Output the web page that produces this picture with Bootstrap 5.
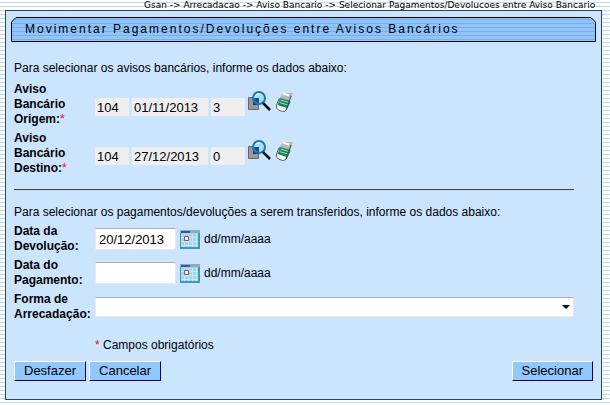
<!DOCTYPE html>
<html lang="pt-BR">
<head>
<meta charset="utf-8">
<meta name="viewport" content="width=device-width, initial-scale=1">
<title>Movimentar Pagamentos/Devoluções entre Avisos Bancários</title>
<link href="https://cdn.jsdelivr.net/npm/bootstrap@5.3.0/dist/css/bootstrap.min.css" rel="stylesheet">
<style>
body{font-family:"Liberation Sans",Arial,sans-serif;font-size:12px;line-height:15px;color:#000;overflow-x:hidden;
 background:repeating-linear-gradient(#fff 0 2px,#b9dcf3 2px 3px,#fff 3px 4px)}
.trail{font:9px/10px "DejaVu Sans",Verdana,sans-serif;height:10px;margin-left:144px;white-space:nowrap}
.panel{margin:0 8px 0 5px;border:1px solid #2b4560;background:#cbe5ff;padding:6px 5px 18px}
.titlebar{display:grid;height:25px}
.titlebar>*{grid-area:1/1}
.tb-bg{display:grid;grid-template-columns:6px 1fr 6px;height:25px}
.tb-bg svg{display:block;width:100%;height:25px}
.titlebar h1{font-size:12px;line-height:25px;letter-spacing:2px;margin:0;padding-left:14px;white-space:nowrap}
.content{padding:19px 3px 0}
.frow{display:grid;grid-template-columns:79px 1fr;column-gap:2px}
.lbl{font-weight:bold;white-space:nowrap}
.req{color:#f00;font-weight:normal}
.fld{font-size:13px;border-radius:0;color:#000;min-width:0}
.ro{border:0;background:#efefef;height:18px;padding:0 2px}
.ro-sm{width:34px}.ro-md{width:76px}
.dt,.sel{border:1px solid #e3e9ef;border-top-color:#abadb3;background:#fff;padding:0 3px}
.dt{width:81px;height:22px}
.selwrap{display:grid}
.selwrap>*{grid-area:1/1}
.sel{width:100%;height:20px;appearance:none}
.selwrap svg{place-self:center end;margin-right:4px;pointer-events:none}
.inset-end{margin-right:19px}
.rule{height:2px;margin:0;border-top:1px solid #444;border-bottom:1px solid #d8d8d8;opacity:1}
.act{border:1px solid;border-color:#fff #00005c #00005c #fff;border-radius:0;background:#90c8ff;color:#000;font-size:13px;line-height:16px;padding:1px 9px;height:20px}
.icb{border:0;background:none;padding:0;line-height:0}
.gap3{gap:3px}
.intro{margin:0 0 6px}
.codes{padding-bottom:11px}
.icons{padding-bottom:3px;gap:3px}
.split{padding:13px 0 14px}
</style>
<script src="https://cdn.jsdelivr.net/npm/bootstrap@5.3.0/dist/js/bootstrap.bundle.min.js"></script>
</head>
<body>
<svg width="0" height="0" class="position-absolute" aria-hidden="true">
<defs><pattern id="st" width="4" height="4" patternUnits="userSpaceOnUse"><path d="M0 0h4v4H0z" fill="#90c4fc"/><path d="M0 2.500h4" stroke="#7aaee6"/></pattern></defs>
<symbol id="find" viewBox="0 0 24 22"><path d="M.5 6.500h10v12h-10z" fill="#999" stroke="#666"/><path d="M5 6h6v8H5z" fill="#123c5c"/><circle cx="11" cy="7" r="6" fill="#a9dcff" stroke="#1479b8" stroke-width="2"/><path d="M6 7h5v5A5 5 0 0 1 6 7z" fill="#14547f"/><path d="M7 5q2-3 5-2" stroke="#fff" fill="none"/><path d="M15 12l7 7" stroke="#111" stroke-width="2.500"/></symbol>
<symbol id="erase" viewBox="0 0 20 20"><path d="M8 1l10 0-3 9-11-3z" fill="#b4b8b8"/><path d="M8 1.500l6 2" stroke="#fff" stroke-width="2"/><path d="M4 7l11 3-3.500 7.500q-1 2-4 2l-4-1.500Q1 17 1.500 13z" fill="#fff" stroke="#333" stroke-width=".8"/><path d="M5 6l10.500 3-3.500 7-9.500-3z" fill="#12855a"/><path d="M5.500 8l8.500 2.500M4.500 10.500l8.500 2.500" stroke="#a9e0c6" fill="none"/><path d="M16 4l-5 14" stroke="#333" stroke-width=".8"/></symbol>
<symbol id="cal" viewBox="0 0 20 19"><path d="M0 0h20v19H0z" fill="#4795b5"/><path d="M1 3h17v14H1z" fill="#a0d8ea"/><path d="M0 0h20v3H0z" fill="#8eabc0"/><path d="M1 1h9v2H1z" fill="#3c4eb0"/><path d="M1 7.500h17M1 11.500h17M1 15.500h17M4.500 4v13M8.500 4v13M12.500 4v13M16.500 4v13" stroke="#c4eaf6"/><path d="M4.500 6.500h4v4h-4z" fill="#eee" stroke="#a04850"/></symbol>
</svg>
<nav class="trail" aria-label="Caminho">Gsan -&gt; Arrecadacao -&gt; Aviso Bancario -&gt; Selecionar Pagamentos/Devolucoes entre Aviso Bancario</nav>
<main class="panel">
<header class="titlebar">
<div class="tb-bg" aria-hidden="true">
<svg viewBox="0 0 6 25"><path d="M6 .5H5L.5 5v19.500H6" fill="url(#st)" stroke="#000"/></svg>
<svg><rect width="100%" height="25" fill="url(#st)"/><path d="M0 .5h2000M0 24.500h2000" stroke="#000"/></svg>
<svg viewBox="0 0 6 25"><path d="M0 .5h1L5.500 5v19.500H0" fill="url(#st)" stroke="#000"/></svg>
</div>
<h1>Movimentar Pagamentos/Devoluções entre Avisos Bancários</h1>
</header>
<form class="content">
<p class="intro">Para selecionar os avisos bancários, informe os dados abaixo:</p>
<div class="frow mb-1">
<label class="lbl" for="o1">Aviso<br>Bancário<br>Origem:<span class="req">*</span></label>
<div class="d-flex align-items-end gap3 codes">
<input id="o1" class="fld ro ro-sm" value="104" readonly><input class="fld ro ro-md" value="01/11/2013" aria-label="Data do aviso de origem" readonly><input class="fld ro ro-sm" value="3" aria-label="Sequencial do aviso de origem" readonly>
<div class="d-flex icons"><button type="button" class="icb" aria-label="Pesquisar aviso de origem"><svg width="24" height="22"><use href="#find"/></svg></button><button type="button" class="icb" aria-label="Limpar aviso de origem"><svg width="20" height="20"><use href="#erase"/></svg></button></div>
</div>
</div>
<div class="frow">
<label class="lbl" for="d1">Aviso<br>Bancário<br>Destino:<span class="req">*</span></label>
<div class="d-flex align-items-end gap3 codes">
<input id="d1" class="fld ro ro-sm" value="104" readonly><input class="fld ro ro-md" value="27/12/2013" aria-label="Data do aviso de destino" readonly><input class="fld ro ro-sm" value="0" aria-label="Sequencial do aviso de destino" readonly>
<div class="d-flex icons"><button type="button" class="icb" aria-label="Pesquisar aviso de destino"><svg width="24" height="22"><use href="#find"/></svg></button><button type="button" class="icb" aria-label="Limpar aviso de destino"><svg width="20" height="20"><use href="#erase"/></svg></button></div>
</div>
</div>
<div class="split inset-end"><hr class="rule"></div>
<p class="mb-1">Para selecionar os pagamentos/devoluções a serem transferidos, informe os dados abaixo:</p>
<div class="frow mb-1">
<label class="lbl" for="dd">Data da<br>Devolução:</label>
<div class="d-flex align-items-center gap-1"><input id="dd" class="fld dt" value="20/12/2013"><button type="button" class="icb" aria-label="Abrir calendário"><svg width="20" height="19"><use href="#cal"/></svg></button><span>dd/mm/aaaa</span></div>
</div>
<div class="frow mb-1">
<label class="lbl" for="dp">Data do<br>Pagamento:</label>
<div class="d-flex align-items-center gap-1"><input id="dp" class="fld dt"><button type="button" class="icb" aria-label="Abrir calendário"><svg width="20" height="19"><use href="#cal"/></svg></button><span>dd/mm/aaaa</span></div>
</div>
<div class="frow">
<label class="lbl" for="fa">Forma de<br>Arrecadação:</label>
<div class="selwrap inset-end align-items-center"><select id="fa" class="fld sel"><option></option></select><svg width="8" height="5" aria-hidden="true"><path d="M0 0h8L4 4z"/></svg></div>
</div>
<div class="frow pt-3 mb-1"><span></span><div><span class="req">*</span> Campos obrigatórios</div></div>
<div class="d-flex gap3 pt-1"><button type="reset" class="act">Desfazer</button><button type="button" class="act">Cancelar</button><button type="submit" class="act ms-auto">Selecionar</button></div>
</form>
</main>
</body>
</html>
